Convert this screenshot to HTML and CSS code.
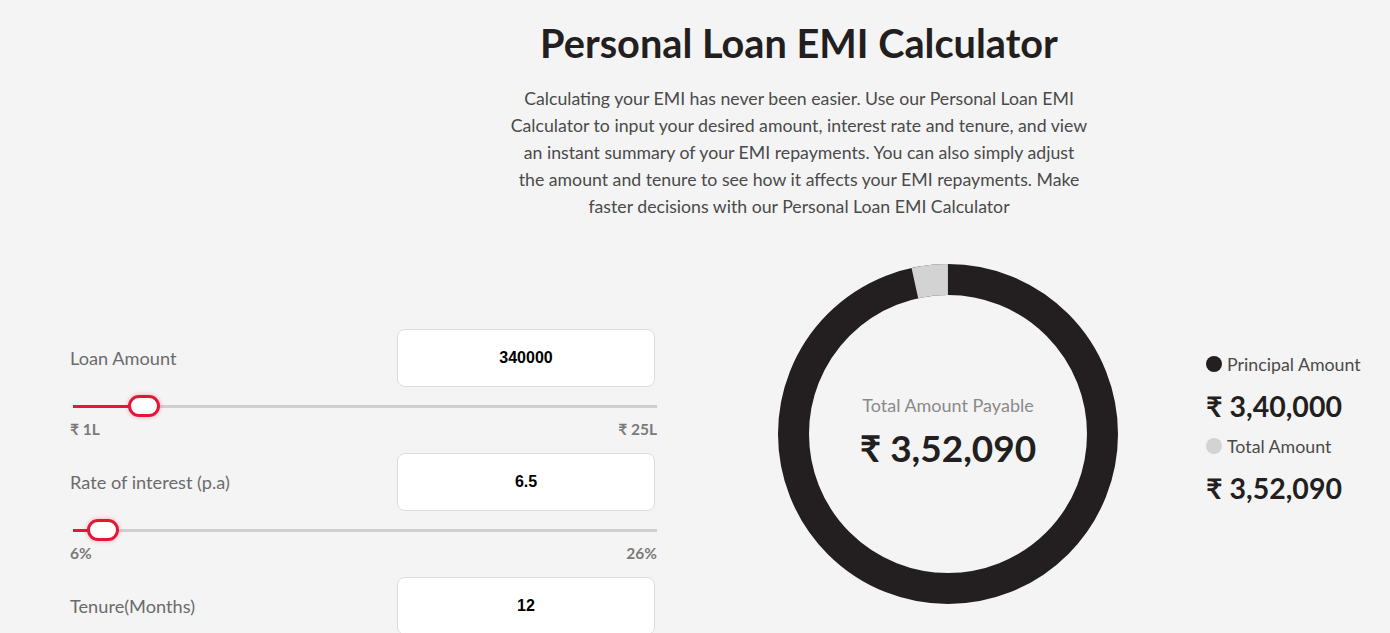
FILE: index.html
```html
<!DOCTYPE html>
<html lang="en">
<head>
<meta charset="utf-8">
<title>Personal Loan EMI Calculator</title>
<link rel="stylesheet" href="styles.css">
</head>
<body>
<main class="page">
  <header class="intro">
    <h1 class="title">Personal Loan EMI Calculator</h1>
    <p class="lead">Calculating your EMI has never been easier. Use our Personal Loan EMI Calculator to input your desired amount, interest rate and tenure, and view an instant summary of your EMI repayments. You can also simply adjust the amount and tenure to see how it affects your EMI repayments. Make faster decisions with our Personal Loan EMI Calculator</p>
  </header>

  <section class="calc">
    <div class="inputs">
      <div class="field">
        <div class="field-row">
          <label class="field-label">Loan Amount</label>
          <div class="field-box">340000</div>
        </div>
        <div class="slider" style="--p:0.1">
          <div class="slider-fill"></div>
          <div class="slider-thumb"></div>
        </div>
        <div class="range-labels"><span>₹ 1L</span><span>₹ 25L</span></div>
      </div>

      <div class="field">
        <div class="field-row">
          <label class="field-label">Rate of interest (p.a)</label>
          <div class="field-box">6.5</div>
        </div>
        <div class="slider" style="--p:0.025">
          <div class="slider-fill"></div>
          <div class="slider-thumb"></div>
        </div>
        <div class="range-labels"><span>6%</span><span>26%</span></div>
      </div>

      <div class="field">
        <div class="field-row">
          <label class="field-label">Tenure(Months)</label>
          <div class="field-box">12</div>
        </div>
        <div class="slider" style="--p:0">
          <div class="slider-fill"></div>
          <div class="slider-thumb"></div>
        </div>
      </div>
    </div>

    <div class="chart">
      <svg class="donut" width="340" height="340" viewBox="0 0 340 340">
        <circle cx="170" cy="170" r="154.5" fill="none" stroke="#231f20" stroke-width="31"/>
        <circle cx="170" cy="170" r="154.5" fill="none" stroke="#d3d3d3" stroke-width="31"
          stroke-dasharray="33.3 937" transform="rotate(-102.36 170 170)"/>
      </svg>
      <div class="donut-center">
        <div class="donut-label">Total Amount Payable</div>
        <div class="donut-value">₹ 3,52,090</div>
      </div>
    </div>

    <div class="legend">
      <div class="legend-item">
        <div class="legend-name"><span class="dot dot-dark"></span>Principal Amount</div>
        <div class="legend-value">₹ 3,40,000</div>
      </div>
      <div class="legend-item">
        <div class="legend-name"><span class="dot dot-light"></span>Total Amount</div>
        <div class="legend-value">₹ 3,52,090</div>
      </div>
    </div>
  </section>
</main>
</body>
</html>
```

FILE: styles.css
```css
* { box-sizing: border-box; }

html, body {
  margin: 0;
  padding: 0;
  background: #f4f4f4;
  height: 100%;
  overflow: hidden;
}

body {
  font-family: "Lato", "Noto Sans", "DejaVu Sans", sans-serif;
  color: #231f20;
}

.page {
  padding-top: 19px;
}

.intro {
  width: 600px;
  margin-left: 499px;
  text-align: center;
}

.title {
  margin: 0;
  font-size: 39.7px;
  line-height: 48px;
  font-weight: 700;
  color: #231f20;
}

.lead {
  margin: 18px 0 0;
  font-size: 17.7px;
  line-height: 27px;
  color: #4a4a4a;
  padding: 0 11px;
}

.calc {
  display: flex;
  align-items: flex-start;
  margin-top: 44px;
}

.inputs {
  width: 587px;
  margin-left: 70px;
  padding-top: 65px;
  display: flex;
  flex-direction: column;
  gap: 15px;
}

.field-row {
  display: flex;
  align-items: center;
  justify-content: space-between;
  padding-right: 2px;
}

.field-label {
  font-size: 18.2px;
  color: #6b6b6b;
}

.field-box {
  width: 258px;
  height: 58px;
  background: #fff;
  border: 1px solid #dcdcdc;
  border-radius: 8px;
  display: flex;
  align-items: center;
  justify-content: center;
  font-family: "Liberation Sans", Arial, sans-serif;
  font-weight: 700;
  font-size: 16px;
  color: #000;
}

.slider {
  position: relative;
  height: 3px;
  margin: 18px 0 0 3px;
  background: #cfcfcf;
}

.slider-fill {
  height: 3px;
  width: calc(var(--p) * (100% - 31px) + 15px);
  background: #e31837;
}

.slider-thumb {
  position: absolute;
  top: -10px;
  left: calc(var(--p) * (100% - 31px));
  width: 32px;
  height: 22px;
  border: 3px solid #e31837;
  border-radius: 11px;
  background: #fff;
  box-shadow: 0 0 4px rgba(227, 24, 55, 0.35);
}

.range-labels {
  display: flex;
  justify-content: space-between;
  margin-top: 12px;
  font-size: 15.5px;
  font-weight: 700;
  color: #7a7a7a;
  line-height: 18px;
}

.chart {
  position: relative;
  width: 340px;
  height: 340px;
  margin-left: 121px;
}

.donut {
  display: block;
}

.donut-center {
  position: absolute;
  inset: 0;
  display: flex;
  flex-direction: column;
  align-items: center;
  justify-content: center;
  padding-bottom: 4px;
}

.donut-label {
  font-size: 18px;
  color: #8a8a8a;
  line-height: 22px;
}

.donut-value {
  margin-top: 10px;
  font-size: 37px;
  font-weight: 700;
  color: #231f20;
  line-height: 44px;
}

.legend {
  margin-left: 88px;
  padding-top: 88px;
  display: flex;
  flex-direction: column;
  gap: 11px;
}

.legend-name {
  display: flex;
  align-items: center;
  font-size: 17.8px;
  color: #4a4a4a;
  line-height: 24px;
}

.dot {
  width: 16px;
  height: 16px;
  border-radius: 50%;
  margin-right: 5px;
  flex: none;
}

.dot-dark { background: #231f20; }
.dot-light { background: #d3d3d3; }

.legend-value {
  margin-top: 13px;
  font-size: 28.5px;
  font-weight: 700;
  color: #231f20;
  line-height: 34px;
}
```
